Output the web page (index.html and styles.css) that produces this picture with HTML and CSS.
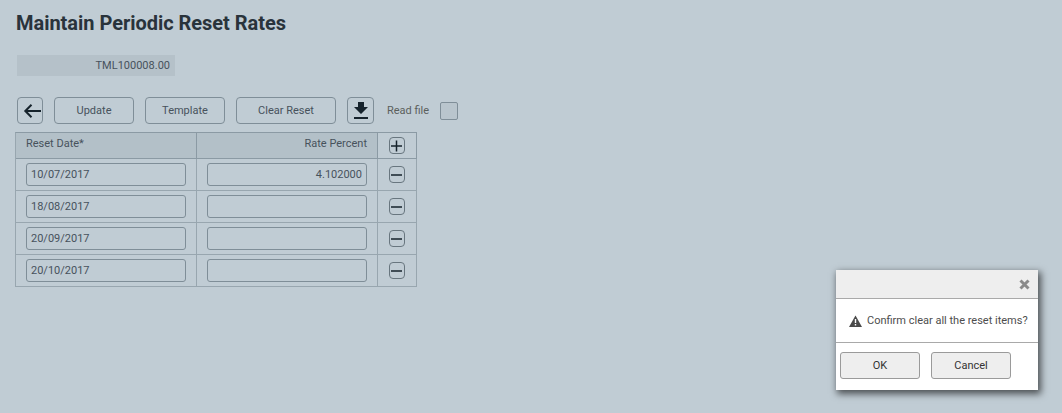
FILE: index.html
```html
<!DOCTYPE html>
<html lang="en">
<head>
<meta charset="utf-8">
<title>Maintain Periodic Reset Rates</title>
<link rel="stylesheet" href="styles.css">
</head>
<body>
<main class="page">
  <h1 class="title">Maintain Periodic Reset Rates</h1>
  <div class="ref-field">TML100008.00</div>
  <div class="toolbar">
    <button class="btn btn-icon btn-back" aria-label="Back">
      <svg width="18" height="14" viewBox="0 0 18 14"><path d="M18 7H2M8.5 0.8 2.3 7l6.2 6.2" fill="none" stroke="#16232c" stroke-width="2"/></svg>
    </button>
    <button class="btn btn-text">Update</button>
    <button class="btn btn-text">Template</button>
    <button class="btn btn-text btn-wide">Clear Reset</button>
    <button class="btn btn-icon btn-down" aria-label="Download">
      <svg width="16" height="19" viewBox="0 0 16 19"><path d="M5 1h6v5h4L8 13 1 6h4z" fill="#16232c"/><path d="M1 17h14" stroke="#16232c" stroke-width="2"/></svg>
    </button>
    <span class="read-label">Read file</span>
    <span class="checkbox"></span>
  </div>
  <div class="grid">
    <div class="cell head">Reset Date*</div>
    <div class="cell head right">Rate Percent</div>
    <div class="cell head action">
      <span class="mini"><svg width="12" height="12" viewBox="0 0 12 12"><path d="M5.5 0.5v11M0 6h11" stroke="#16232c" stroke-width="1.5"/></svg></span>
    </div>

    <div class="cell"><div class="input">10/07/2017</div></div>
    <div class="cell"><div class="input right">4.102000</div></div>
    <div class="cell action"><span class="mini"><svg width="12" height="12" viewBox="0 0 12 12"><path d="M0 6h11" stroke="#16232c" stroke-width="1.5"/></svg></span></div>

    <div class="cell"><div class="input">18/08/2017</div></div>
    <div class="cell"><div class="input right"></div></div>
    <div class="cell action"><span class="mini"><svg width="12" height="12" viewBox="0 0 12 12"><path d="M0 6h11" stroke="#16232c" stroke-width="1.5"/></svg></span></div>

    <div class="cell"><div class="input">20/09/2017</div></div>
    <div class="cell"><div class="input right"></div></div>
    <div class="cell action"><span class="mini"><svg width="12" height="12" viewBox="0 0 12 12"><path d="M0 6h11" stroke="#16232c" stroke-width="1.5"/></svg></span></div>

    <div class="cell"><div class="input">20/10/2017</div></div>
    <div class="cell"><div class="input right"></div></div>
    <div class="cell action"><span class="mini"><svg width="12" height="12" viewBox="0 0 12 12"><path d="M0 6h11" stroke="#16232c" stroke-width="1.5"/></svg></span></div>
  </div>
</main>

<div class="dialog" role="dialog">
  <div class="dialog-head">
    <svg width="11" height="11" viewBox="0 0 11 11"><path d="M1.5 1.5l8 8M9.5 1.5l-8 8" stroke="#8a8a8a" stroke-width="3"/></svg>
  </div>
  <div class="dialog-body">
    <svg width="13" height="12" viewBox="0 0 13 12"><path d="M6.5 0.5 13 12H0z" fill="#4a4a4a"/><path d="M6.5 4v4M6.5 9v1.6" stroke="#fff" stroke-width="1.4"/></svg>
    <span>Confirm clear all the reset items?</span>
  </div>
  <div class="dialog-foot">
    <button class="dlg-btn">OK</button>
    <button class="dlg-btn">Cancel</button>
  </div>
</div>
</body>
</html>
```
FILE: styles.css
```css
* { box-sizing: border-box; }

html, body {
  margin: 0;
  height: 100%;
}

body {
  background: #c0ccd4;
  font-family: Roboto, "Liberation Sans", sans-serif;
  font-size: 11px;
  color: #47525c;
  overflow: hidden;
}

.page {
  padding: 12px 15px 0;
}

.title {
  margin: 0 0 0 1px;
  font-size: 20px;
  line-height: 23px;
  font-weight: 700;
  letter-spacing: -0.03px;
  color: #29333b;
}

.ref-field {
  margin: 20px 0 0 2px;
  width: 158px;
  height: 21px;
  padding-right: 5px;
  background: #b5c1c9;
  line-height: 21px;
  text-align: right;
}

.toolbar {
  display: flex;
  align-items: center;
  gap: 11px;
  margin: 21px 0 0 2px;
  height: 27px;
}

.btn {
  height: 27px;
  padding: 0 0 1px;
  display: flex;
  align-items: center;
  justify-content: center;
  background: transparent;
  border: 1px solid #7f8e98;
  border-radius: 4px;
  font: inherit;
  color: inherit;
}

.btn-icon { width: 26px; padding: 0; }
.btn-back { padding-left: 3px; }
.btn-down { width: 27px; }
.btn-text { width: 80px; }
.btn-wide { width: 100px; }

.read-label {
  margin-left: 2px;
  color: #5b5f5c;
}

.checkbox {
  width: 18px;
  height: 18px;
  border: 1px solid #7f8e98;
  border-radius: 2px;
  background: #b9c5cd;
}

.grid {
  display: grid;
  grid-template-columns: 181px 181px 39px;
  grid-template-rows: 26px repeat(4, 32px);
  width: 402px;
  margin-top: 8px;
  border-top: 1px solid #8b9aa4;
  border-left: 1px solid #98a6af;
}

.cell {
  display: flex;
  align-items: center;
  padding: 0 10px;
  border-right: 1px solid #98a6af;
  border-bottom: 1px solid #98a6af;
}

.head {
  align-items: flex-start;
  padding-top: 4px;
  background: #b3c0c8;
  border-bottom-color: #8b9aa4;
  border-right-color: #8b9aa4;
}

.head.right {
  justify-content: flex-end;
}

.action {
  justify-content: center;
  padding: 0;
}

.head.action {
  background: #c0ccd4;
  align-items: center;
  padding: 0;
}

.input {
  width: 160px;
  height: 23px;
  padding: 0 4px;
  border: 1px solid #7f8e98;
  border-radius: 3px;
  line-height: 21px;
}

.input.right {
  text-align: right;
}

.mini {
  width: 16px;
  height: 17px;
  display: flex;
  align-items: center;
  justify-content: center;
  border: 1px solid #68767f;
  border-radius: 4px;
}

.dialog {
  position: absolute;
  left: 836px;
  top: 270px;
  width: 202px;
  height: 120px;
  background: #fff;
  box-shadow: 2px 3px 7px 1px rgba(0, 0, 0, 0.6);
  color: #4d4d4d;
}

.dialog-head {
  display: flex;
  justify-content: flex-end;
  align-items: center;
  height: 29px;
  padding: 0 8px 0 0;
  background: #eeeeee;
  border-bottom: 1px solid #a9a9a9;
}

.dialog-body {
  display: flex;
  align-items: center;
  gap: 5px;
  height: 44px;
  padding-left: 13px;
  border-bottom: 1px solid #a9a9a9;
}

.dialog-foot {
  display: flex;
  gap: 11px;
  padding: 9px 0 0 4px;
}

.dlg-btn {
  width: 80px;
  height: 27px;
  padding: 0;
  background: #eeeeee;
  border: 1px solid #9a9a9a;
  border-radius: 3px;
  font: inherit;
  color: #333;
}
```
